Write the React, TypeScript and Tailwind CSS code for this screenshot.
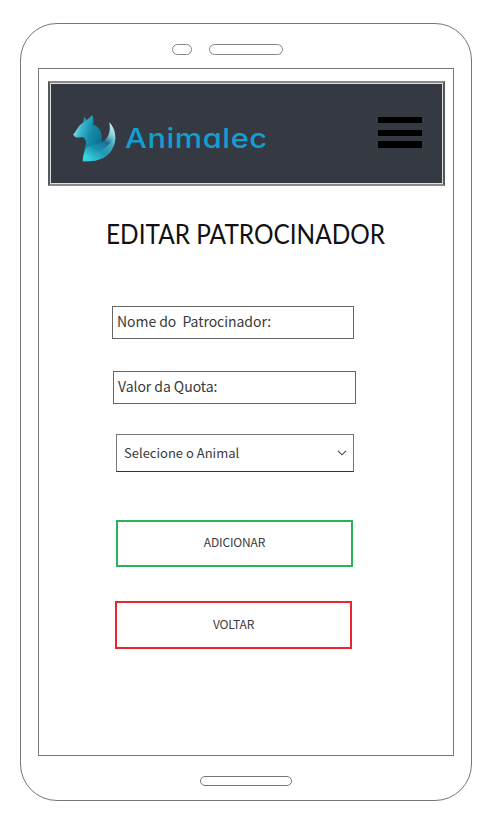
import React from "react";

function FoxLogo() {
  return (
    <svg width="44" height="50" viewBox="0 0 44 50" className="shrink-0">
      <defs>
        <linearGradient id="head" x1="0" y1="0.3" x2="1" y2="0.7">
          <stop offset="0" stopColor="#a5edf2" />
          <stop offset="0.25" stopColor="#3bb8ce" />
          <stop offset="0.6" stopColor="#148aa8" />
          <stop offset="1" stopColor="#0d6f8e" />
        </linearGradient>
        <linearGradient id="tail" x1="0.9" y1="0" x2="0.3" y2="1">
          <stop offset="0" stopColor="#d9fbfa" />
          <stop offset="0.28" stopColor="#7ac6d2" />
          <stop offset="0.45" stopColor="#1f7093" />
          <stop offset="0.72" stopColor="#1a93b0" />
          <stop offset="1" stopColor="#37d3e0" />
        </linearGradient>
        <linearGradient id="sweep" x1="1" y1="0" x2="0" y2="1">
          <stop offset="0" stopColor="#7ed4dd" />
          <stop offset="0.5" stopColor="#1f9ab7" />
          <stop offset="1" stopColor="#3bd8e4" />
        </linearGradient>
      </defs>
      <g transform="translate(0 1)">
        <path d="M10 9 L11 1.7 L15 6Z" fill="#2b93a8" />
        <path
          d="M.3 19.3 C3 17 4 13 7 10 C9 8 11 7 13 6 L19.3 0 C20.6 3 20.8 6 20 9.5 C25 11 28.5 16 28.7 20 L29 29 L12 38 C10.5 34 13.5 31 13 27.3 C12.5 24.5 11.5 22.8 9.7 22.3 C7 22 5 23 3 22.3 C1.5 21.5 .5 20.8 .3 19.3Z"
          fill="url(#head)"
        />
        <path
          d="M36.3 7.3 C40 11 42.5 17 42.3 22 C42.5 28 40 35 35 39.5 C28 45.5 20 46.5 9.7 46.3 C10 41 11 35 14.5 32 C19 30 24 30 28.7 27.3 C34 24 38.5 19 36.3 7.3Z"
          fill="url(#tail)"
        />
        <path
          d="M42.3 22 C42.5 28 40 35 35 39.5 C28 45.5 20 46.5 9.7 46.3 C16 45 21 41 24 37 C31 34 38 29 42.3 22Z"
          fill="url(#sweep)"
          opacity="0.75"
        />
      </g>
    </svg>
  );
}

function Header() {
  return (
    <header className="h-[105px] w-[397px] border-2 border-[#8b8b8b] border-r-[#55585c] border-l-[#55585c]">
      <div className="flex h-full items-start border border-[#dedede] bg-[#353a42]">
        <div className="ml-[22px] mt-[30px] flex">
          <FoxLogo />
        </div>
        <span className="ml-[8px] mt-[34px] w-[150px] origin-left scale-x-[1.12] whitespace-nowrap font-['Inter',sans-serif] text-[27.5px] font-medium leading-[40px] tracking-[0.5px] text-[#129ed0] [font-feature-settings:'cv11']">
          Animalec
        </span>
        <button aria-label="Menu" className="ml-[103px] mt-[33px] flex w-[44px] shrink-0 flex-col">
          <span className="h-[6px] w-full bg-black" />
          <span className="mt-[7px] h-[6px] w-full bg-black" />
          <span className="mt-[5px] h-[7px] w-full bg-black" />
        </button>
      </div>
    </header>
  );
}

export default function App() {
  return (
    <div className="h-[837px] w-[489px] overflow-hidden bg-white pl-[20px] pt-[23px] font-['Noto_Sans_CJK_SC',sans-serif] text-[#3a3a3a]">
      <div className="flex h-[778px] w-[452px] flex-col rounded-[37px] border border-[#777] pl-[17px]">
        <div className="flex h-[44px] shrink-0 pl-[134px] pt-[20px]">
          <div className="h-[11px] w-[20px] rounded-full border border-[#858585]" />
          <div className="ml-[17px] h-[11px] w-[74px] rounded-full border border-[#858585]" />
        </div>
        <main className="flex h-[688px] w-[416px] shrink-0 flex-col border border-[#777] pl-[9px] pt-[12px]">
          <Header />
          <h1 className="ml-[58px] mt-[28px] h-[40px] origin-left scale-x-[0.938] whitespace-nowrap font-['Lato',sans-serif] text-[26px] leading-[40px] text-[#111]">
            EDITAR PATROCINADOR
          </h1>
          <div className="ml-[64px] mt-[52px] flex h-[33px] w-[242px] items-center whitespace-pre border border-[#666] pb-[2px] pl-[4px] text-[14px] tracking-[-0.05px]">
            {"Nome do  Patrocinador:"}
          </div>
          <div className="ml-[65px] mt-[32px] flex h-[33px] w-[243px] items-center border border-[#666] pb-[2px] pl-[4px] text-[14px] tracking-[-0.05px]">
            Valor da Quota:
          </div>
          <div className="ml-[68px] mt-[30px] flex h-[38px] w-[238px] items-center justify-between border border-[#777] border-b-[#333] pl-[7px] pr-[6px] text-[13px]">
            <span>Selecione o Animal</span>
            <svg width="10" height="6" viewBox="0 0 10 6" fill="none" stroke="#444" strokeWidth="1.1">
              <path d="M1 .8 5 4.8 9 .8" />
            </svg>
          </div>
          <button className="ml-[68px] mt-[48px] h-[47px] w-[237px] border-2 border-[#29b355] pb-[3px] text-[12px] tracking-[-0.15px]">
            ADICIONAR
          </button>
          <button className="ml-[67px] mt-[34px] h-[48px] w-[237px] border-2 border-[#eb2530] pb-[2px] text-[12px] tracking-[-0.15px]">
            VOLTAR
          </button>
        </main>
        <div className="ml-[162px] mt-[20px] h-[10px] w-[92px] shrink-0 rounded-full border border-[#777]" />
      </div>
    </div>
  );
}
